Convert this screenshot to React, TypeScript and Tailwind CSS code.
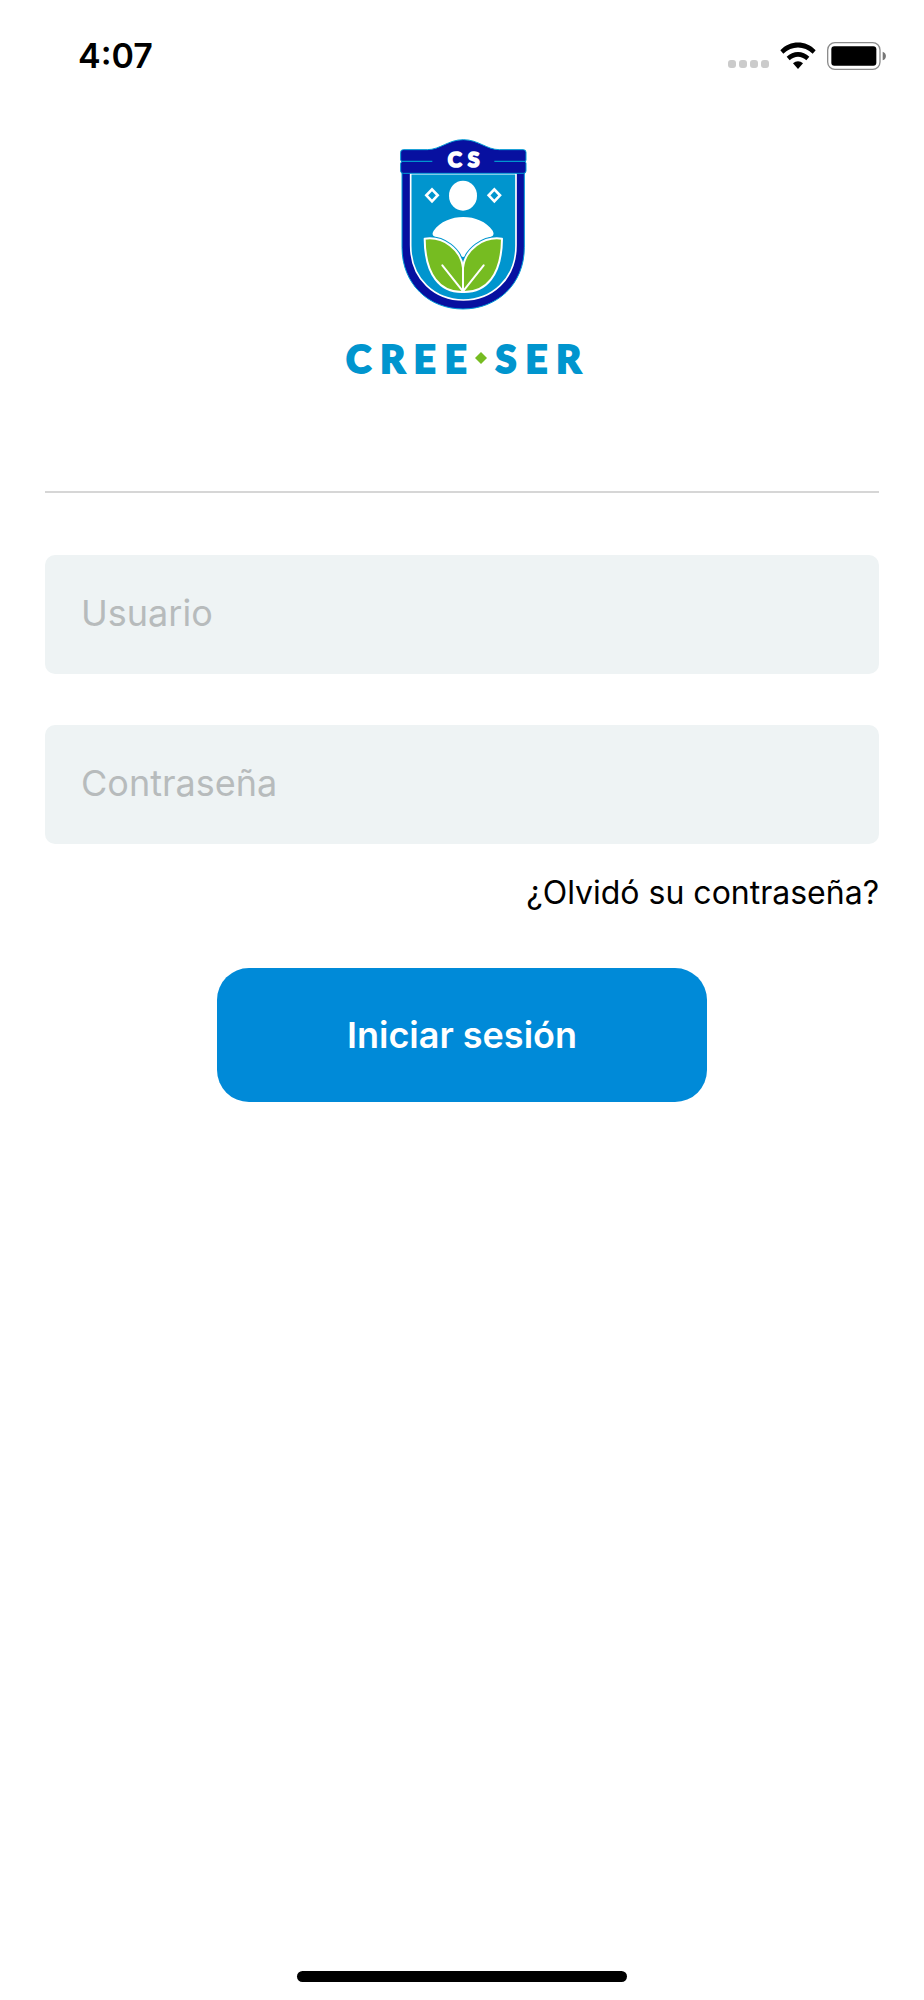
import React from "react";

function SignalDots() {
  return (
    <span className="flex gap-[3px] pt-4" aria-hidden="true">
      {[0, 1, 2, 3].map((dot) => (
        <span key={dot} className="size-2 rounded-[3px] bg-[#cbcbcb]" />
      ))}
    </span>
  );
}

function WifiIcon() {
  return (
    <svg viewBox="0 0 108 84" className="h-7 w-9" aria-hidden="true">
      <path d="M1 25C30-6 78-6 107 25l-9 10C72 10 36 10 10 35Z" />
      <path d="M20 44C39 25 69 25 88 44l-9 11C64 41 44 41 29 55Z" />
      <path d="M39 64C48 56 60 56 69 64L54 81Z" />
    </svg>
  );
}

function BatteryIcon() {
  return (
    <svg viewBox="0 0 180 84" className="h-7 w-15" aria-hidden="true">
      <rect x="2" y="2" width="157" height="80" rx="22" fill="none" stroke="#8c8c8c" strokeWidth="4" />
      <rect x="13" y="13" width="135" height="58" rx="9" />
      <path d="M167 29c13 4 13 22 0 26Z" fill="#777" />
    </svg>
  );
}

function StatusBar() {
  return (
    <header className="flex h-28 items-center justify-between pr-[37px] pl-[78px]">
      <time className="text-[34px] leading-10 font-semibold text-black">4:07</time>
      <div className="flex items-center gap-[11px]">
        <SignalDots />
        <WifiIcon />
        <BatteryIcon />
      </div>
    </header>
  );
}

function Crest() {
  return (
    <svg viewBox="57 54 390 516" className="h-[172px] w-[130px]" role="img" aria-label="CS">
      <path
        d="M66 155H433V382C433 494 350 567 249 567S66 494 66 382Z"
        fill="#0710a0"
        stroke="#009bd5"
        strokeWidth="3"
      />
      <path d="M92 161H408V376C408 480 333 540 250 540S92 480 92 376Z" fill="#0095ce" stroke="#fff" strokeWidth="5" />
      <path
        d="M70 89H142C180 89 205 59 250 59S320 89 358 89H430Q438 89 438 97V120L436 125L438 130V153Q438 160 430 160H70Q62 160 62 153V130L65 125L62 120V97Q62 89 70 89Z"
        fill="#0710a0"
        stroke="#009bd5"
        strokeWidth="3"
      />
      <path d="M64 124H157M343 124H436" stroke="#0095ce" strokeWidth="4" />
      <g fill="none" stroke="#fff" strokeWidth="8">
        <path d="M156 208L173 226L156 244L139 226Z" />
        <path d="M343 208L360 226L343 244L326 226Z" />
      </g>
      <ellipse cx="249" cy="227" rx="42" ry="45" fill="#fff" />
      <path
        d="M161 332C200 277 300 277 338 332Q345 346 334 350C298 362 278 382 260 405Q249 417 239 405C221 382 202 362 164 350Q153 346 161 332Z"
        fill="#fff"
      />
      <g stroke="#0095ce" strokeWidth="12" fill="none">
        <path d="M134 356C190 348 243 388 249 444C255 388 310 348 366 356" />
      </g>
      <g fill="#76bc21" stroke="#fff" strokeWidth="6" strokeLinejoin="round" strokeLinecap="round">
        <path d="M249 516C181 518 135 466 134 356C190 348 243 388 249 444Z" />
        <path d="M249 516C318 518 365 466 366 356C310 348 255 388 249 444Z" />
        <path d="M187 436L249 514L311 436" fill="none" />
      </g>
      <text
        x="260"
        y="140"
        textAnchor="middle"
        fill="#fff"
        stroke="#fff"
        strokeWidth="5"
        strokeLinejoin="round"
        fontSize="64"
        className="font-['Lato',sans-serif] font-black tracking-[18px]"
      >
        CS
      </text>
    </svg>
  );
}

function Brand() {
  return (
    <div className="flex flex-col items-center pl-[3px]">
      <Crest />
      <h1 className="mt-6 flex items-center font-['Lato',sans-serif] text-[38px] leading-[48px] font-black text-[#0095ce] [-webkit-text-stroke:2px_#0095ce]">
        <span className="tracking-[9px]">CREE</span>
        <svg viewBox="0 0 12 12" className="mr-2 size-3" aria-hidden="true">
          <path d="M6 0L12 6L6 12L0 6Z" fill="#76bc21" />
        </svg>
        <span className="-mr-[9px] tracking-[9px]">SER</span>
      </h1>
    </div>
  );
}

function Field({ id, label, type }: { id: string; label: string; type: string }) {
  return (
    <input
      id={id}
      name={id}
      type={type}
      aria-label={label}
      placeholder={label}
      className="block h-[119px] w-full rounded-[10px] bg-[#eef3f4] px-9 pb-1 text-[36px] text-black outline-none placeholder:text-[#b7bbbc]"
    />
  );
}

export default function App() {
  return (
    <div className="flex min-h-screen flex-col bg-white font-['Inter',sans-serif] text-black">
      <StatusBar />
      <main className="px-[45px] pt-[26px]">
        <Brand />
        <hr className="mt-[109px] border-t-2 border-[#d6d6d6]" />
        <form className="mt-[62px] flex flex-col" onSubmit={(event) => event.preventDefault()}>
          <div className="flex flex-col gap-[51px]">
            <Field id="usuario" label="Usuario" type="text" />
            <Field id="contrasena" label="Contraseña" type="password" />
          </div>
          <a href="#recuperar" className="mt-[29px] self-end text-[32px] leading-10">
            ¿Olvidó su contraseña?
          </a>
          <button
            type="submit"
            className="mt-[55px] h-[134px] w-[490px] max-w-full self-center rounded-[32px] bg-[#008ad8] text-[36px] font-semibold text-white"
          >
            Iniciar sesión
          </button>
        </form>
      </main>
      <footer className="mt-auto flex justify-center pb-[18px]">
        <div className="h-[11px] w-[330px] rounded-full bg-black" />
      </footer>
    </div>
  );
}
